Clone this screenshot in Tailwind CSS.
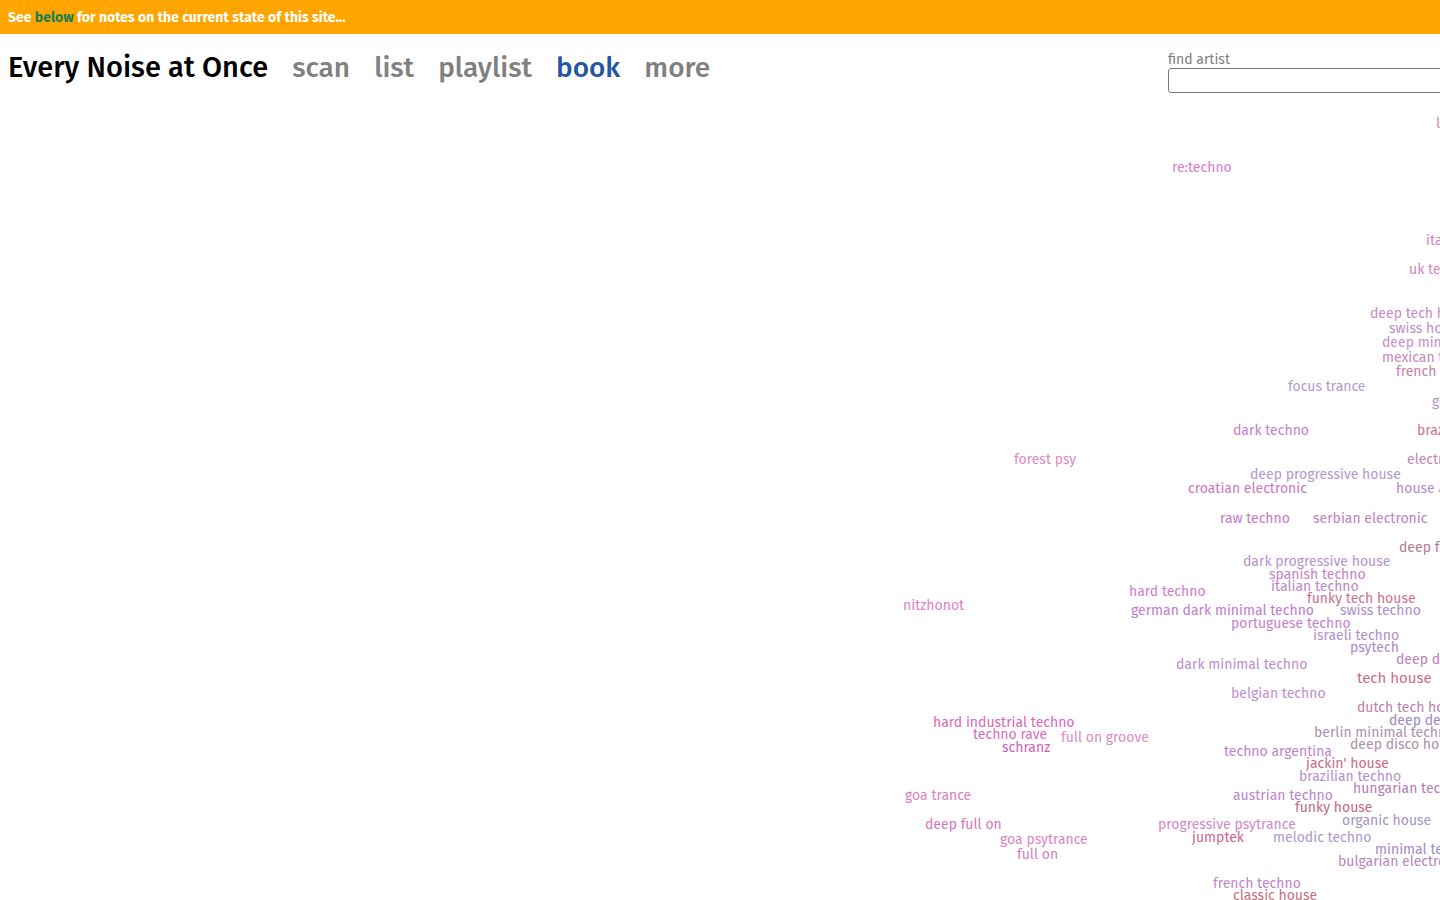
<!DOCTYPE html>
<html lang="en">
<head>
    <meta charset="utf-8">
    <meta name="viewport" content="width=device-width, initial-scale=1">
    <title>Every Noise at Once</title>
    <script src="https://cdn.jsdelivr.net/npm/@tailwindcss/browser@4"></script>
</head>
<body class="flex flex-col h-screen bg-white text-sm font-['Fira_Sans','Open_Sans',sans-serif] overflow-hidden">
    <!-- Site notice -->
    <div class="bg-[#ffa500] text-white font-bold px-2 pt-2 pb-1.5 leading-5">
        See <a href="#notes" class="text-[#188050]">below</a> for notes on the current state of this site...
    </div>

    <!-- Title and search -->
    <header class="flex items-start justify-between pl-2 pt-4 pb-[9px]">
        <div class="flex items-baseline gap-6 text-[28px] leading-9 font-medium text-[#808080]">
            <h1 class="text-black text-[29px]">Every Noise at Once</h1>
            <nav class="flex gap-6">
                <a href="#scan">scan</a>
                <a href="#list">list</a>
                <a href="#playlist">playlist</a>
                <a href="#book" class="text-[#2456a4]">book</a>
                <a href="#more">more</a>
            </nav>
        </div>
        <form class="w-[272px]">
            <label for="artist" class="block pt-0.5 text-[#808080] leading-4">find artist</label>
            <input id="artist" type="text" class="block w-[320px] h-[25px] border border-[#767676] rounded-[3px] px-1">
        </form>
    </header>

    <!-- Genre map -->
    <main class="relative flex-1 overflow-hidden whitespace-nowrap leading-4 opacity-85">
        <a href="#" class="absolute left-[1436px] top-[14px] text-[#cf70a8]">latin tech house</a>
        <a href="#" class="absolute left-[1172px] top-[58px] text-[#d468ca]">re:techno</a>
        <a href="#" class="absolute left-[1426px] top-[131px] text-[#cb6fb0]">italian tech house</a>
        <a href="#" class="absolute left-[1409px] top-[160px] text-[#c873b5]">uk tech house</a>
        <a href="#" class="absolute left-[1370px] top-[204px] text-[#bf78ba]">deep tech house</a>
        <a href="#" class="absolute left-[1389px] top-[219px] text-[#ae80b8]">swiss house</a>
        <a href="#" class="absolute left-[1382px] top-[233px] text-[#be78c2]">deep minimal techno</a>
        <a href="#" class="absolute left-[1382px] top-[248px] text-[#c470b0]">mexican tech house</a>
        <a href="#" class="absolute left-[1396px] top-[262px] text-[#bc6c98]">french tech house</a>
        <a href="#" class="absolute left-[1288px] top-[277px] text-[#a68aca]">focus trance</a>
        <a href="#" class="absolute left-[1432px] top-[292px] text-[#a284b8]">german house</a>
        <a href="#" class="absolute left-[1233px] top-[321px] text-[#bc6ac8]">dark techno</a>
        <a href="#" class="absolute left-[1417px] top-[321px] text-[#c05c78]">brazilian house</a>
        <a href="#" class="absolute left-[1014px] top-[350px] text-[#dc74b4]">forest psy</a>
        <a href="#" class="absolute left-[1407px] top-[350px] text-[#bc70b0]">electronic house</a>
        <a href="#" class="absolute left-[1250px] top-[365px] text-[#a888c6]">deep progressive house</a>
        <a href="#" class="absolute left-[1188px] top-[379px] text-[#c860b0]">croatian electronic</a>
        <a href="#" class="absolute left-[1396px] top-[379px] text-[#a878b4]">house argentino</a>
        <a href="#" class="absolute left-[1220px] top-[409px] text-[#c064b8]">raw techno</a>
        <a href="#" class="absolute left-[1313px] top-[409px] text-[#b56cb4]">serbian electronic</a>
        <a href="#" class="absolute left-[1399px] top-[438px] text-[#ac6080]">deep funk house</a>
        <a href="#" class="absolute left-[1243px] top-[452px] text-[#a882c8]">dark progressive house</a>
        <a href="#" class="absolute left-[1269px] top-[465px] text-[#bc6cbc]">spanish techno</a>
        <a href="#" class="absolute left-[1271px] top-[477px] text-[#b074bc]">italian techno</a>
        <a href="#" class="absolute left-[1129px] top-[482px] text-[#c868c4]">hard techno</a>
        <a href="#" class="absolute left-[1307px] top-[489px] text-[#c85878]">funky tech house</a>
        <a href="#" class="absolute left-[903px] top-[496px] text-[#d86cb8]">nitzhonot</a>
        <a href="#" class="absolute left-[1131px] top-[501px] text-[#b468c4]">german dark minimal techno</a>
        <a href="#" class="absolute left-[1340px] top-[501px] text-[#a07cbc]">swiss techno</a>
        <a href="#" class="absolute left-[1231px] top-[514px] text-[#bc6cc0]">portuguese techno</a>
        <a href="#" class="absolute left-[1313px] top-[526px] text-[#a47cbc]">israeli techno</a>
        <a href="#" class="absolute left-[1350px] top-[538px] text-[#9c78bc]">psytech</a>
        <a href="#" class="absolute left-[1396px] top-[550px] text-[#b468a8]">deep deep house</a>
        <a href="#" class="absolute left-[1176px] top-[555px] text-[#b07cc4]">dark minimal techno</a>
        <a href="#" class="absolute left-[1357px] top-[568px] text-[15px] text-[#c4566e]">tech house</a>
        <a href="#" class="absolute left-[1231px] top-[584px] text-[#b47cc8]">belgian techno</a>
        <a href="#" class="absolute left-[1357px] top-[598px] text-[#b46c9c]">dutch tech house</a>
        <a href="#" class="absolute left-[1389px] top-[611px] text-[#8c74b8]">deep deep tech house</a>
        <a href="#" class="absolute left-[933px] top-[613px] text-[#d84cac]">hard industrial techno</a>
        <a href="#" class="absolute left-[1314px] top-[623px] text-[#9c8098]">berlin minimal techno</a>
        <a href="#" class="absolute left-[973px] top-[625px] text-[#d454b0]">techno rave</a>
        <a href="#" class="absolute left-[1061px] top-[628px] text-[#d878b8]">full on groove</a>
        <a href="#" class="absolute left-[1350px] top-[635px] text-[#98809c]">deep disco house</a>
        <a href="#" class="absolute left-[1002px] top-[638px] text-[#cc44ac]">schranz</a>
        <a href="#" class="absolute left-[1224px] top-[642px] text-[#b470c4]">techno argentina</a>
        <a href="#" class="absolute left-[1306px] top-[654px] text-[#c4506c]">jackin' house</a>
        <a href="#" class="absolute left-[1299px] top-[667px] text-[#a880c0]">brazilian techno</a>
        <a href="#" class="absolute left-[1353px] top-[679px] text-[#b064b0]">hungarian techno</a>
        <a href="#" class="absolute left-[905px] top-[686px] text-[#d668b8]">goa trance</a>
        <a href="#" class="absolute left-[1233px] top-[686px] text-[#b470bc]">austrian techno</a>
        <a href="#" class="absolute left-[1295px] top-[698px] text-[#c0506c]">funky house</a>
        <a href="#" class="absolute left-[1342px] top-[711px] text-[#9484b8]">organic house</a>
        <a href="#" class="absolute left-[925px] top-[715px] text-[#d060b0]">deep full on</a>
        <a href="#" class="absolute left-[1158px] top-[715px] text-[#cc74bc]">progressive psytrance</a>
        <a href="#" class="absolute left-[1192px] top-[728px] text-[#c44c80]">jumptek</a>
        <a href="#" class="absolute left-[1273px] top-[728px] text-[#a088c4]">melodic techno</a>
        <a href="#" class="absolute left-[1000px] top-[730px] text-[#d470bc]">goa psytrance</a>
        <a href="#" class="absolute left-[1375px] top-[740px] text-[#9078b8]">minimal tech house</a>
        <a href="#" class="absolute left-[1017px] top-[745px] text-[#d068b4]">full on</a>
        <a href="#" class="absolute left-[1338px] top-[752px] text-[#b070b0]">bulgarian electronic</a>
        <a href="#" class="absolute left-[1213px] top-[774px] text-[#b870c0]">french techno</a>
        <a href="#" class="absolute left-[1233px] top-[786px] text-[#bc5868]">classic house</a>
    </main>
</body>
</html>
